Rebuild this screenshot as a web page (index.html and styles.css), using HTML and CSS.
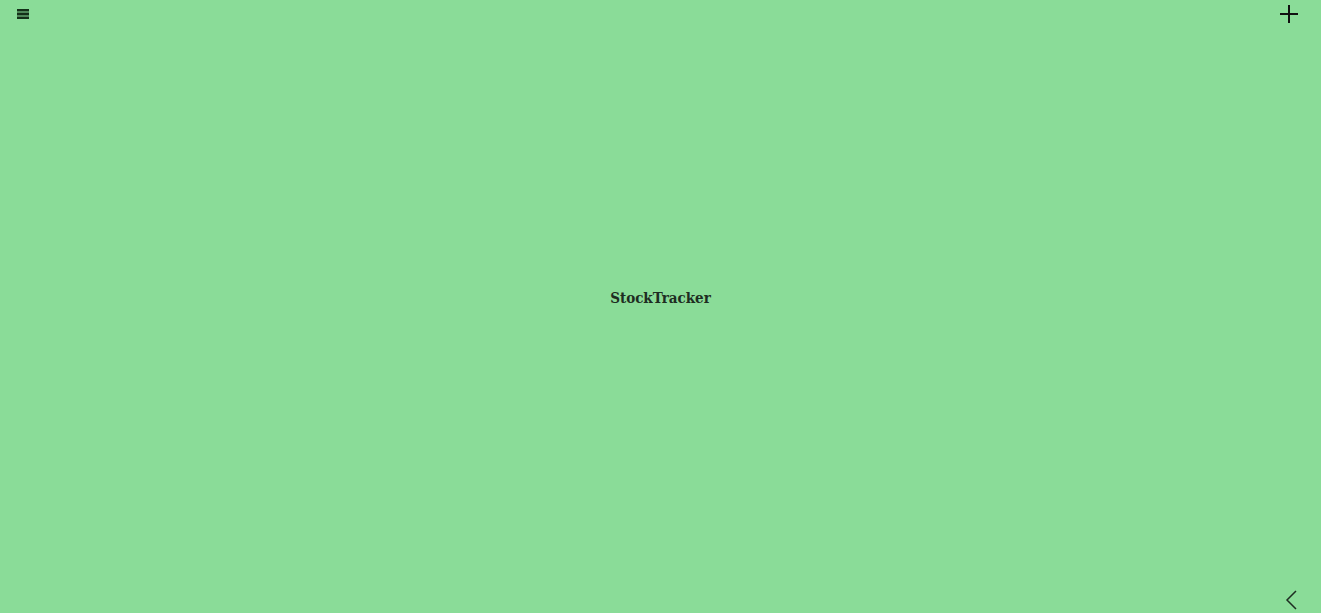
FILE: index.html
```html
<!DOCTYPE html>
<html lang="en">
<head>
<meta charset="utf-8">
<title>StockTracker</title>
<link rel="stylesheet" href="styles.css">
</head>
<body>
<div class="app">
  <header class="topbar">
    <button class="icon-btn menu" aria-label="Menu">
      <svg width="12" height="10" viewBox="0 0 12 10"><rect x="0" y="0" width="12" height="2"/><rect x="0" y="4" width="12" height="2"/><rect x="0" y="8" width="12" height="2"/></svg>
    </button>
    <button class="icon-btn add" aria-label="Add">
      <svg width="20" height="20" viewBox="0 0 20 20"><path d="M10 1v18M1 10h18" stroke-width="2" fill="none"/></svg>
    </button>
  </header>
  <main class="center">
    <h1 class="title">StockTracker</h1>
  </main>
  <footer class="bottombar">
    <button class="icon-btn back" aria-label="Back">
      <svg width="12" height="20" viewBox="0 0 12 20"><path d="M11 1L2 10l9 9" stroke-width="1.5" fill="none"/></svg>
    </button>
  </footer>
</div>
</body>
</html>
```
FILE: styles.css
```css
html, body {
  margin: 0;
  padding: 0;
  height: 100%;
}
body {
  background: #8adc98;
  color: #1b2e20;
  font-family: "DejaVu Serif Condensed", "DejaVu Serif", serif;
}
.app {
  display: flex;
  flex-direction: column;
  height: 100vh;
}
.topbar {
  display: flex;
  justify-content: space-between;
  align-items: flex-start;
  padding: 4px 22px 0 17px;
  height: 24px;
}
.icon-btn {
  background: none;
  border: 0;
  padding: 0;
  margin: 0;
  display: flex;
  cursor: pointer;
}
.icon-btn svg {
  fill: #143019;
  stroke: #143019;
}
.menu { margin-top: 5px; }
.add { margin-top: 0; }
.add svg { stroke: #111; }
.center {
  flex: 1;
  display: flex;
  align-items: center;
  justify-content: center;
}
.title {
  margin: 0 0 22px 0;
  font-size: 15px;
  font-weight: bold;
  font-stretch: condensed;
  color: #1e2d22;
}
.bottombar {
  display: flex;
  justify-content: flex-end;
  padding: 0 24px 3px 0;
}
.back svg { fill: none; stroke: #1e2d22; }
```
